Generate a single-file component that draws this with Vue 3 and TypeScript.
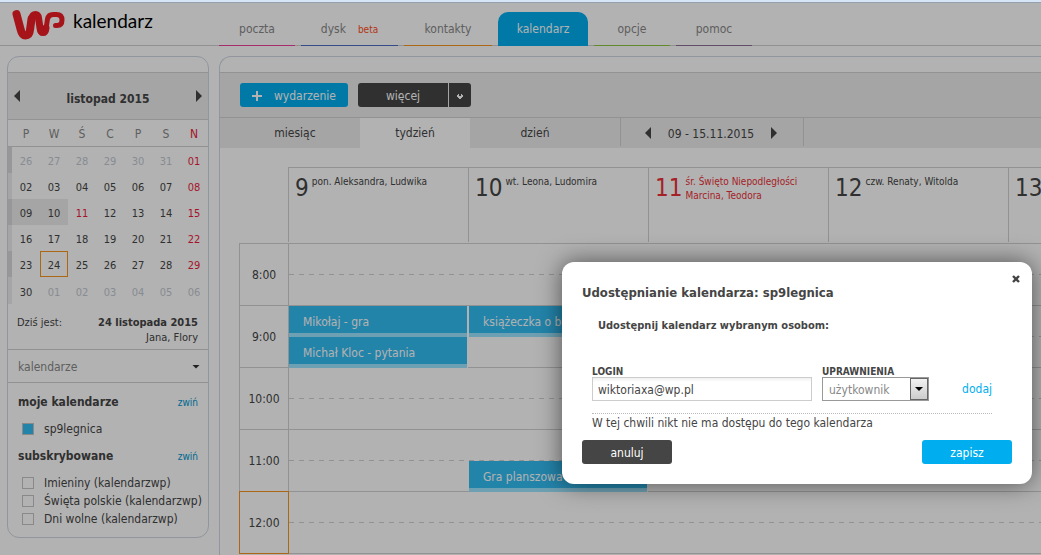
<script setup lang="ts">
import { computed, ref } from 'vue'

interface Tab { id: string; label: string; note?: string }
interface Day { n: string; kind?: string }
interface CalEvent { title: string; col: number; row: number }

const tabs: Tab[] = [
  { id: 'poczta', label: 'poczta' },
  { id: 'dysk', label: 'dysk', note: 'beta' },
  { id: 'kontakty', label: 'kontakty' },
  { id: 'kalendarz', label: 'kalendarz' },
  { id: 'opcje', label: 'opcje' },
  { id: 'pomoc', label: 'pomoc' },
]
const weekdays = ['P', 'W', 'Ś', 'C', 'P', 'S', 'N']
const pad = (n: number) => String(n).padStart(2, '0')

const weeks = computed<Day[][]>(() => {
  const days: Day[] = []
  for (let n = 26; n <= 31; n++) days.push({ n: pad(n), kind: 'other' })
  for (let n = 1; n <= 30; n++) {
    let kind = ''
    if (n % 7 === 1 || n === 11) kind = 'holiday'
    else if (n === 9 || n === 10) kind = 'marked'
    else if (n === 24) kind = 'today'
    days.push({ n: pad(n), kind })
  }
  for (let n = 1; n <= 6; n++) days.push({ n: pad(n), kind: 'other' })
  const rows: Day[][] = []
  for (let i = 0; i < 42; i += 7) rows.push(days.slice(i, i + 7))
  return rows
})

const subscribed = ref([
  { name: 'Imieniny (kalendarzwp)', on: false },
  { name: 'Święta polskie (kalendarzwp)', on: false },
  { name: 'Dni wolne (kalendarzwp)', on: false },
])
const own = ref(true)
const columns = [
  { n: 9, lines: ['pon. Aleksandra, Ludwika'] },
  { n: 10, lines: ['wt. Leona, Ludomira'] },
  { n: 11, lines: ['śr. Święto Niepodległości', 'Marcina, Teodora'], red: true },
  { n: 12, lines: ['czw. Renaty, Witolda'] },
  { n: 13, lines: [] },
]
const hours = [8, 9, 10, 11, 12]
const events: CalEvent[] = [
  { title: 'Mikołaj - gra', col: 1, row: 3 },
  { title: 'Michał Kloc - pytania', col: 1, row: 4 },
  { title: 'książeczka o be', col: 2, row: 3 },
  { title: 'Gra planszowa', col: 2, row: 8 },
]
const login = ref('wiktoriaxa@wp.pl')
const open = ref(true)
</script>

<template>
  <div class="page">
    <header class="top">
      <div class="brand">
        <svg class="logo" width="54" height="32" viewBox="0 0 54 32" fill="none" stroke="#ee1c25" stroke-linecap="round" stroke-linejoin="round" aria-hidden="true">
          <path stroke-width="8" d="M4.500 5 L8.500 20 Q10 26.500 13.500 26.500 Q17.500 26.500 18 21 L19.500 10" />
          <path stroke-width="7" d="M19.500 10 Q20.500 5.500 23.500 5.500 Q26 5.500 26.500 9 L28 19 Q28.500 23.500 31 23.500 Q33.500 23.500 34 19" />
          <path stroke-width="5" d="M34 20 L35.500 10 Q36.500 5.500 41 5.500 H44.500 Q50 5.500 50 11 Q50 16.500 45 16.500 H43.500" />
        </svg>
        <span class="brand-name">kalendarz</span>
      </div>
      <nav class="nav">
        <a v-for="t in tabs" :key="t.id" href="#" class="nav-tab" :class="t.id">{{ t.label }}<small v-if="t.note">{{ t.note }}</small></a>
      </nav>
    </header>

    <div class="columns">
      <aside class="side">
        <div class="month-head">
          <button class="arrow left" aria-label="Poprzedni miesiąc"></button>
          <strong>listopad 2015</strong>
          <button class="arrow right" aria-label="Następny miesiąc"></button>
        </div>
        <table class="month">
          <thead>
            <tr><th class="bar"></th><th v-for="(d, i) in weekdays" :key="i">{{ d }}</th></tr>
          </thead>
          <tbody>
            <tr v-for="(w, i) in weeks" :key="i">
              <td class="bar"></td>
              <td v-for="(d, j) in w" :key="j" :class="d.kind">{{ d.n }}</td>
            </tr>
          </tbody>
        </table>
        <div class="today-line">
          <span>Dziś jest:</span>
          <div><strong>24 listopada 2015</strong><br />Jana, Flory</div>
        </div>
        <button class="fold">kalendarze<i class="caret"></i></button>
        <section class="lists">
          <div class="list-head"><h2>moje kalendarze</h2><a href="#">zwiń</a></div>
          <label class="cal own"><input v-model="own" type="checkbox" />sp9legnica</label>
          <div class="list-head"><h2>subskrybowane</h2><a href="#">zwiń</a></div>
          <div class="subs">
            <label v-for="s in subscribed" :key="s.name" class="cal"><input v-model="s.on" type="checkbox" />{{ s.name }}</label>
          </div>
        </section>
      </aside>

      <main class="main">
        <div class="toolbar">
          <button class="btn blue add">
            <svg width="10" height="10" viewBox="0 0 10 10" aria-hidden="true"><path d="M5 0V10M0 5H10" stroke="#fff" stroke-width="2" /></svg>
            wydarzenie
          </button>
          <div class="split">
            <button class="btn dark more">więcej</button>
            <button class="btn dark drop" aria-label="Rozwiń">
              <svg width="6" height="5" viewBox="0 0 6 5" aria-hidden="true"><path d="M0 1h1V0h1v1h2V0h1v1h1v2h-1v1h-1v1h-2v-1h-1v-1h-1z M2 1v1h2v-1z" fill="#fff" fill-rule="evenodd" /></svg>
            </button>
          </div>
        </div>
        <div class="views">
          <button>miesiąc</button>
          <button class="on">tydzień</button>
          <button>dzień</button>
          <div class="range">
            <button class="arrow left" aria-label="Poprzedni tydzień"></button>
            <span>09 - 15.11.2015</span>
            <button class="arrow right" aria-label="Następny tydzień"></button>
          </div>
        </div>
        <div class="week">
          <div class="day-row">
            <div v-for="c in columns" :key="c.n" class="day" :class="{ red: c.red }">
              <b>{{ c.n }}</b>
              <p><span v-for="l in c.lines" :key="l">{{ l }}</span></p>
            </div>
          </div>
          <div class="body">
            <div class="times">
              <div v-for="h in hours" :key="h" class="time" :class="{ now: h === 12 }">{{ h }}:00</div>
            </div>
            <div class="slots">
              <div v-for="n in hours.length * 2" :key="n" class="slot" :class="{ half: n % 2 }" :style="{ gridRow: n }"></div>
              <div v-for="e in events" :key="e.title" class="event" :style="{ gridRow: e.row, gridColumn: e.col }">{{ e.title }}</div>
            </div>
          </div>
        </div>
      </main>
    </div>

    <div v-if="open" class="overlay">
      <form class="dialog" role="dialog" aria-labelledby="dlg-title" @submit.prevent>
        <button type="button" class="close" aria-label="Zamknij" @click="open = false">
          <svg width="8" height="8" viewBox="0 0 8 8" aria-hidden="true"><path d="M1 1L7 7M7 1L1 7" stroke="#454545" stroke-width="2.400" /></svg>
        </button>
        <h1 id="dlg-title">Udostępnianie kalendarza: sp9legnica</h1>
        <h3>Udostępnij kalendarz wybranym osobom:</h3>
        <div class="fields">
          <div class="field login">
            <label for="login">LOGIN</label>
            <input id="login" v-model="login" type="text" />
          </div>
          <div class="field role">
            <label for="role">UPRAWNIENIA</label>
            <div class="select">
              <select id="role"><option>użytkownik</option></select>
              <span class="select-btn"><i class="caret"></i></span>
            </div>
          </div>
          <a href="#" class="give">dodaj</a>
        </div>
        <p class="none">W tej chwili nikt nie ma dostępu do tego kalendarza</p>
        <div class="actions">
          <button type="button" class="btn dark" @click="open = false">anuluj</button>
          <button type="submit" class="btn blue">zapisz</button>
        </div>
      </form>
    </div>
  </div>
</template>

<style>
body { margin: 0; overflow: hidden; }
</style>

<style scoped>
* { box-sizing: border-box; }
.page {
  position: relative;
  height: 100vh;
  overflow: hidden;
  display: flex;
  flex-direction: column;
  border-top: 2px solid #d6e5f7;
  background: #fff;
  color: #454545;
  font: 12px/16px "DejaVu Sans Condensed", "DejaVu Sans", sans-serif;
}
button, input, select { font: inherit; color: inherit; margin: 0; }
button { border: 0; padding: 0; background: none; }
a { color: #0095d0; text-decoration: none; }
h1, h2, h3, p { margin: 0; }

.top {
  flex: none;
  height: 44px;
  display: flex;
  border-top: 1px solid #d6e5f7;
  border-bottom: 1px solid #d2d2d2;
}
.brand { width: 219px; flex: none; display: flex; padding: 6px 0 0 12px; }
.brand-name { margin-left: 7px; font: 19px/24px Lato, sans-serif; color: #000; }
.nav { display: flex; gap: 6px; align-items: flex-end; margin-bottom: -1px; }
.nav-tab {
  height: 34px;
  width: 76px;
  text-align: center;
  line-height: 34px;
  color: #888;
  border-bottom: 1px solid;
}
.nav-tab small { margin-left: 12px; font-size: 10px; color: #ff4e22; }
.nav-tab.poczta { border-color: #ee3f9c; }
.nav-tab.dysk { width: 97px; border-color: #4a6cc0; }
.nav-tab.kontakty { width: 88px; border-color: #f7941d; }
.nav-tab.kalendarz {
  width: 90px;
  color: #fff;
  background: #00aeef;
  border-color: #00aeef;
  border-radius: 10px 10px 0 0;
}
.nav-tab.opcje { border-color: #8cc63f; }
.nav-tab.pomoc { border-color: #8c6f94; }

.columns { flex: 1; display: flex; align-items: flex-start; padding: 10px 0 0 7px; min-height: 0; }
.side {
  flex: none;
  width: 202px;
  margin-right: 10px;
  padding-top: 15px;
  border: 1px solid #ced6e3;
  border-radius: 12px;
}
.month-head {
  display: flex;
  justify-content: space-between;
  align-items: center;
  height: 48px;
  padding: 4px 6px 0;
  border: solid #d2d2d2;
  border-width: 1px 0;
  background: #ececec;
}
.month-head strong { padding-top: 2px; }
.arrow { width: 6px; height: 12px; background: #454545; }
.arrow.left { clip-path: polygon(100% 0, 0 50%, 100% 100%); }
.arrow.right { clip-path: polygon(0 0, 100% 50%, 0 100%); }
.month-head .arrow { margin-bottom: 4px; }
.month { width: 100%; table-layout: fixed; border-collapse: separate; border-spacing: 0; font-size: 11px; }
.month th, .month td { height: 26px; padding: 3px 0 0; line-height: 15px; text-align: center; font-weight: normal; }
.month th { height: 27px; border-bottom: 1px solid #d2d2d2; color: #888; font-size: 12px; }
.month .bar { width: 4px; }
.month td.bar { background: #ececec; }
.month tbody tr:nth-child(odd) td.bar { background: #d9d9d9; }
.month tbody tr:last-child td { height: 27px; }
.month th:last-child, .month .holiday { color: #ee1c3c; }
.month .other { color: #c3c9d2; }
.month .marked { background: #ececec; }
.month .today { border: 1px solid #f7941d; }
.today-line {
  display: flex;
  justify-content: space-between;
  height: 46px;
  padding: 11px 10px 0 9px;
  border-bottom: 1px solid #d2d2d2;
  font-size: 11px;
  line-height: 15px;
}
.today-line div { text-align: right; }
.fold {
  width: 100%;
  height: 33px;
  padding: 1px 8px 0 10px;
  display: flex;
  justify-content: space-between;
  align-items: center;
  border-bottom: 1px solid #d2d2d2;
  color: #888;
}
.caret { width: 8px; height: 4px; background: #303030; clip-path: polygon(0 0, 100% 0, 50% 100%); }
.lists { padding: 5px 0 9px 10px; }
.list-head { display: flex; align-items: center; justify-content: space-between; height: 28px; padding-right: 10px; }
.list-head h2 { font-size: 12px; }
.list-head a { padding-top: 2px; font-size: 10px; }
.subs { padding-top: 4px; }
.cal { display: flex; align-items: center; height: 18px; white-space: nowrap; }
.cal.own { height: 26px; }
.cal input {
  appearance: none;
  flex: none;
  width: 12px;
  height: 12px;
  margin: 0 10px 0 4px;
  border: 1px solid #c4c4c4;
}
.cal.own input { background: #33bdf4; }

.main {
  flex: 1;
  min-width: 0;
  align-self: stretch;
  padding-top: 15px;
  border: solid #ced6e3;
  border-width: 1px 0 0 1px;
  border-radius: 12px 0 0 0;
  overflow: hidden;
}
.toolbar {
  display: flex;
  align-items: center;
  gap: 10px;
  height: 46px;
  padding-left: 20px;
  border: solid #d2d2d2;
  border-width: 1px 0;
  background: #ececec;
}
.btn { width: 90px; height: 24px; padding-top: 2px; border-radius: 3px; color: #fff; text-align: center; }
.blue { background: #00aeef; }
.dark { background: #454545; }
.add { width: 108px; display: flex; align-items: center; justify-content: center; gap: 12px; }
.split { display: flex; gap: 1px; }
.more { border-radius: 3px 0 0 3px; }
.drop { width: 22px; display: flex; align-items: center; justify-content: center; border-radius: 0 3px 3px 0; }
.views { display: flex; gap: 10px; height: 30px; padding-left: 20px; background: #ececec; }
.views > button { width: 110px; }
.views > .on { background: #fff; }
.range {
  display: flex;
  align-items: center;
  justify-content: space-between;
  width: 184px;
  height: 28px;
  margin-left: 20px;
  padding: 2px 26px 0 24px;
  border: solid #d2d2d2;
  border-width: 0 1px;
}
.range span { padding-top: 2px; }
.week { padding: 19px 0 0 19px; }
.day-row { display: flex; margin-left: 49px; border-top: 1px solid #d2d2d2; height: 76px; overflow: hidden; }
.day {
  flex: 0 0 180px;
  height: 74px;
  display: flex;
  padding: 7px 0 0 6px;
  border-left: 1px solid #d2d2d2;
}
.day b { font: 24px/26px "DejaVu Sans Condensed", sans-serif; }
.day p { margin-left: 3px; font-size: 10px; line-height: 14px; white-space: nowrap; }
.day span { display: block; }
.red { color: #ee3038; }
.body { display: flex; border-top: 1px solid #d2d2d2; }
.times { flex: none; width: 50px; border: solid #d2d2d2; border-width: 0 1px; }
.time { height: 62px; line-height: 63px; text-align: center; border-bottom: 1px solid #d2d2d2; }
.now { margin: -1px -1px 0; height: 63px; border: 1px solid #f7941d; }
.slots { flex: 1; min-width: 0; display: grid; grid-template-columns: repeat(5, 180px); grid-auto-rows: 31px; overflow: hidden; }
.slot { grid-column: 1 / -1; border-bottom: 1px solid #d2d2d2; }
.slot.half {
  border: 0;
  background: repeating-linear-gradient(90deg, #d2d2d2 0 5px, transparent 5px 10px) 0 100% / 100% 1px no-repeat;
}
.event {
  margin-right: 1px;
  padding-left: 14px;
  border-right: 1px solid #fff;
  line-height: 33px;
  color: #fff;
  white-space: nowrap;
  overflow: hidden;
  background: linear-gradient(#33bdf4 27px, #9ce5ff 27px);
}

.overlay { position: absolute; inset: 0; background: rgba(0, 0, 0, .3); }
.dialog {
  position: absolute;
  top: 260px;
  right: 9px;
  width: 470px;
  padding: 22px 20px 20px;
  border-radius: 12px;
  background: #fff;
  box-shadow: 0 0 24px rgba(0, 0, 0, .55);
}
.close { position: absolute; top: 13px; right: 12px; width: 8px; height: 8px; display: flex; }
h1 { font-size: 13px; line-height: 18px; }
h3 { margin: 16px 0 0 16px; font-size: 11px; line-height: 16px; }
.fields { display: flex; gap: 10px; margin: 32px 20px 12px 10px; }
.field { display: flex; flex-direction: column; }
.field label { font-size: 10px; line-height: 11px; font-weight: bold; }
.login { width: 220px; }
.login input { width: 100%; height: 24px; padding: 2px 5px 0; border: 1px solid #ccc; background: linear-gradient(#f0f0f0, #fff 4px); }
.select { display: flex; width: 107px; height: 24px; border: 1px solid #999; }
.select select { flex: 1; min-width: 0; appearance: none; border: 0; padding: 2px 6px 0; background: #fff; color: #888; }
.select-btn { width: 18px; display: flex; align-items: center; justify-content: center; border: 1px solid #666; background: linear-gradient(#f2f2f2, #ccc); pointer-events: none; }
.select-btn .caret { background: #000; }
.give { margin-left: auto; padding-top: 15px; line-height: 16px; color: #00aeef; }
.none { margin: 0 20px 0 10px; padding-top: 1px; border-top: 1px dotted #bbb; }
.actions { display: flex; justify-content: space-between; margin-top: 9px; }
</style>
